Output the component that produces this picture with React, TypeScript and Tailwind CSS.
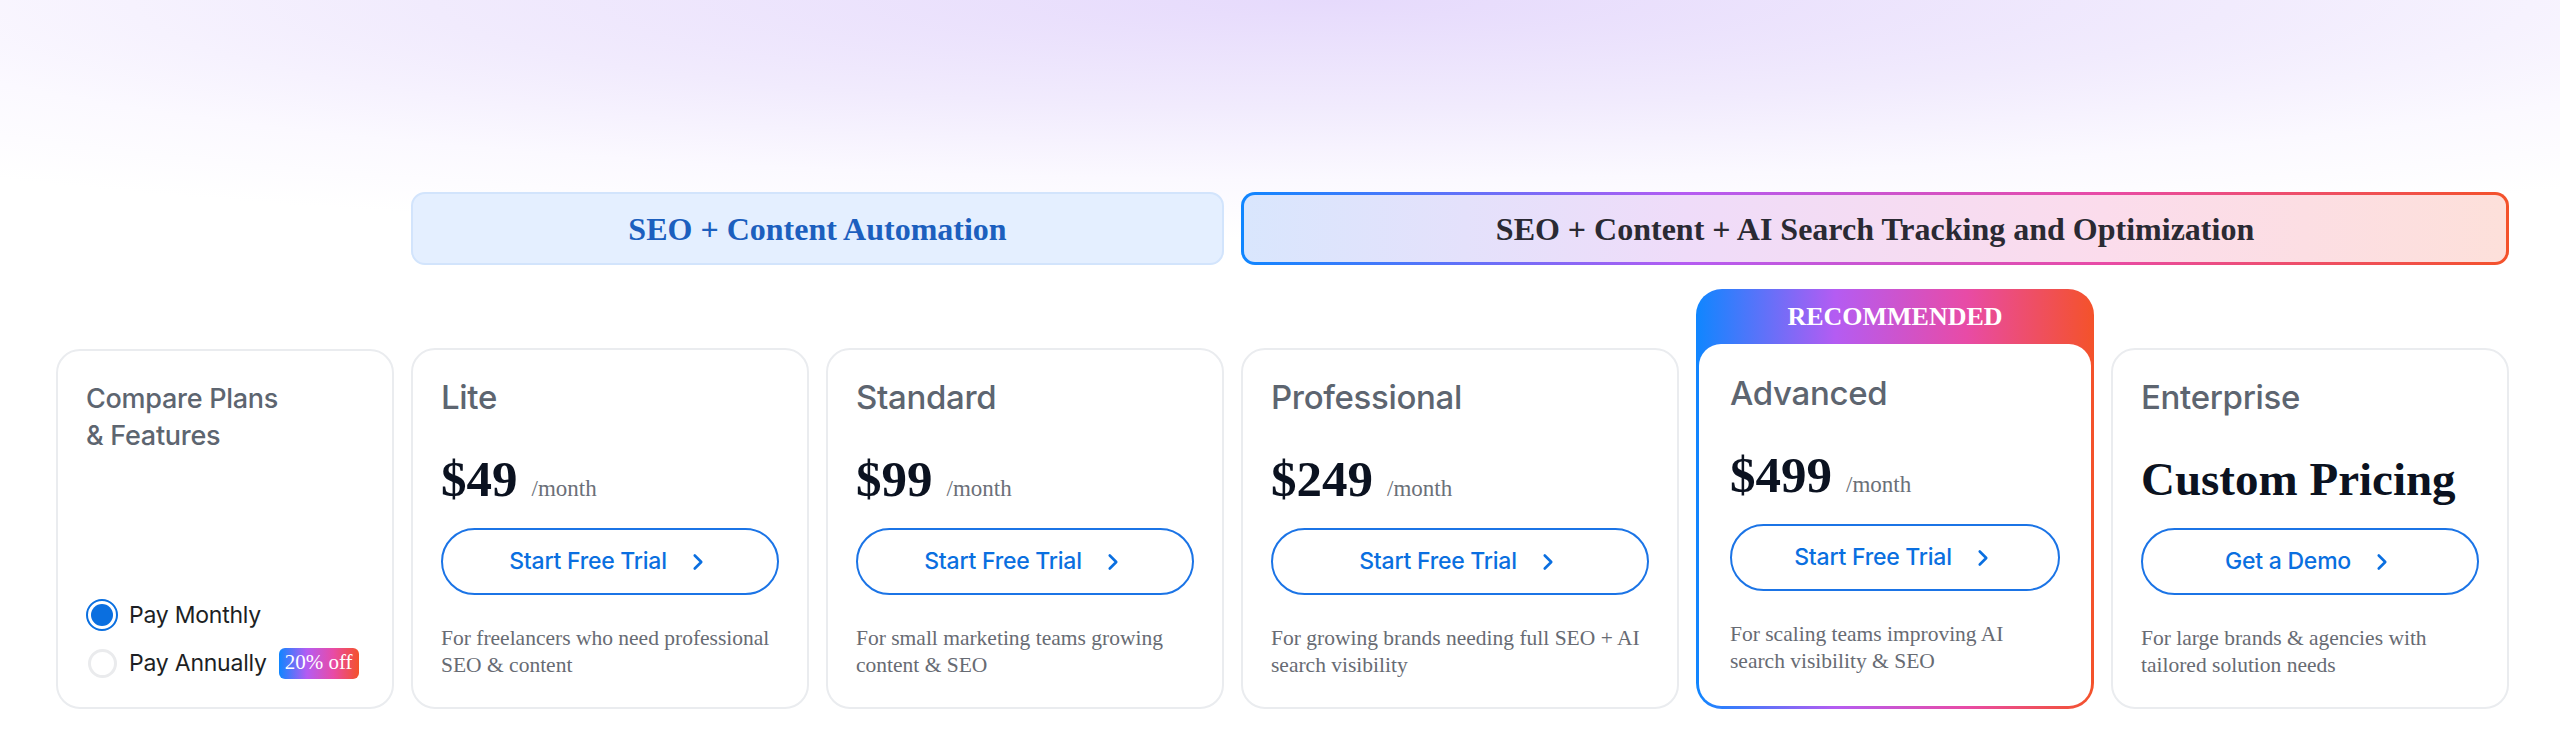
import { ChevronRight } from 'lucide-react'

type Plan = {
  name: string
  price?: string
  cta: string
  lines: string[]
  featured?: boolean
}

const plans: Plan[] = [
  { name: 'Lite', price: '$49', cta: 'Start Free Trial', lines: ['For freelancers who need professional', 'SEO & content'] },
  { name: 'Standard', price: '$99', cta: 'Start Free Trial', lines: ['For small marketing teams growing', 'content & SEO'] },
  { name: 'Professional', price: '$249', cta: 'Start Free Trial', lines: ['For growing brands needing full SEO + AI', 'search visibility'] },
  { name: 'Advanced', price: '$499', cta: 'Start Free Trial', lines: ['For scaling teams improving AI', 'search visibility & SEO'], featured: true },
  { name: 'Enterprise', cta: 'Get a Demo', lines: ['For large brands & agencies with', 'tailored solution needs'] },
]

const brandGradient =
  'bg-[linear-gradient(90deg,#0f86ff_0%,#b45cf2_35%,#e84ba6_68%,#f4522a_100%)]'

function PlanBody({ plan }: { plan: Plan }) {
  return (
    <>
      <h3 className="font-[Inter,sans-serif] text-[33px] leading-[40px] font-medium tracking-[-0.01em] text-[#5d6570]">
        {plan.name}
      </h3>

      <div className="mt-[38px] flex h-[48px] items-baseline gap-[14px] font-['Liberation_Serif',serif] leading-[48px]">
        {plan.price ? (
          <>
            <span className="text-[51px] font-bold text-[#0b1220]">{plan.price}</span>
            <span className="text-[23px] text-[#6b7078]">/month</span>
          </>
        ) : (
          <span className="text-[47px] font-bold whitespace-nowrap text-[#0b1220]">Custom Pricing</span>
        )}
      </div>

      <button
        type="button"
        className="mt-[25px] flex h-[67px] w-full items-center justify-center gap-[18px] rounded-full border-2 border-[#1b74e6] font-[Inter,sans-serif] text-[23px] font-medium tracking-[-0.01em] text-[#0a6fe0]"
      >
        {plan.cta}
        <ChevronRight size={26} strokeWidth={2.4} />
      </button>

      <p className="mt-[30px] font-['Liberation_Serif',serif] text-[21.5px] leading-[27px] whitespace-nowrap text-[#676b73]">
        {plan.lines[0]}
        <br />
        {plan.lines[1]}
      </p>
    </>
  )
}

function PlanCard({ plan }: { plan: Plan }) {
  if (plan.featured) {
    return (
      <div className={`flex h-[420px] flex-col rounded-[26px] px-[3px] pb-[3px] ${brandGradient}`}>
        <div className="flex h-[55px] items-center justify-center font-['Liberation_Serif',serif] text-[26px] font-bold text-white">
          RECOMMENDED
        </div>
        <div className="flex-1 rounded-[22px] bg-white px-[31px] pt-[29px]">
          <PlanBody plan={plan} />
        </div>
      </div>
    )
  }

  return (
    <div className="h-[361px] rounded-3xl border-2 border-[#eaecef] bg-white px-[28px] pt-[27px]">
      <PlanBody plan={plan} />
    </div>
  )
}

function CompareCard() {
  return (
    <div className="flex h-[360px] flex-col justify-between rounded-3xl border-2 border-[#eaecef] bg-white px-[28px] pt-[29px] pb-[28px]">
      <h3 className="font-[Inter,sans-serif] text-[27px] leading-[37px] font-medium tracking-[-0.01em] text-[#5d6570]">
        Compare Plans
        <br />& Features
      </h3>

      <div className="flex flex-col gap-[16px] font-[Inter,sans-serif] text-[23px] tracking-[-0.01em] text-[#1d1f24]">
        <label className="flex h-[32px] items-center gap-[11px]">
          <span className="flex h-[32px] w-[32px] items-center justify-center rounded-full border-2 border-[#0a6fe0] bg-white">
            <span className="h-[22px] w-[22px] rounded-full bg-[#0a6fe0]" />
          </span>
          Pay Monthly
        </label>

        <label className="flex h-[32px] items-center gap-[11px]">
          <span className="flex h-[32px] w-[32px] items-center justify-center">
            <span className="h-[29px] w-[29px] rounded-full border-[3px] border-[#eaebed] bg-white" />
          </span>
          Pay Annually
          <span
            className={`ml-[1px] flex h-[31px] items-center rounded-[6px] px-[6px] font-['Liberation_Serif',serif] text-[21px] tracking-normal text-white ${brandGradient}`}
          >
            20% off
          </span>
        </label>
      </div>
    </div>
  )
}

export default function App() {
  return (
    <div className="min-h-[738px] w-full bg-white bg-[radial-gradient(ellipse_2000px_240px_at_52%_0%,#e6dafc_0%,#f1ebfd_45%,#fbf9ff_75%,#ffffff_100%)]">
      <div className="grid grid-cols-[338px_398px_398px_438px_398px_398px] items-end gap-x-[17px] gap-y-[24px] pt-[192px] pl-[56px]">
        <div />

        <div className="col-span-2 flex h-[73px] items-center justify-center rounded-[14px] border-2 border-[#d2e4fc] bg-[#e4efff] font-['Liberation_Serif',serif] text-[32px] font-bold text-[#1c5fbe]">
          SEO + Content Automation
        </div>

        <div className={`col-span-3 h-[73px] rounded-[14px] p-[3px] ${brandGradient}`}>
          <div className="flex h-full items-center justify-center rounded-[11px] bg-[linear-gradient(90deg,#d9e6fd_0%,#efdcf9_35%,#fbdcec_68%,#fde0da_100%)] font-['Liberation_Serif',serif] text-[32px] font-bold text-[#2a2a33]">
            SEO + Content + AI Search Tracking and Optimization
          </div>
        </div>

        <CompareCard />

        {plans.map((plan) => (
          <PlanCard key={plan.name} plan={plan} />
        ))}
      </div>
    </div>
  )
}
